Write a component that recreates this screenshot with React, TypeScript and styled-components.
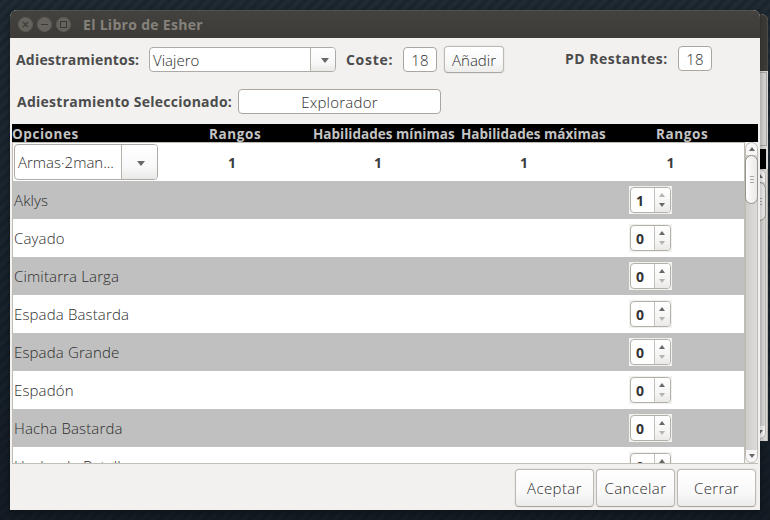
import React from "react";
import styled, { createGlobalStyle } from "styled-components";

const Global = createGlobalStyle`
  *{box-sizing:border-box}
  html,body{margin:0;padding:0;overflow:hidden}
  body{font-family:"Open Sans","Noto Sans",sans-serif;color:#2c2c2c}
`;

const Desktop = styled.div`
  position:relative;width:770px;height:520px;overflow:hidden;
  background:
    linear-gradient(180deg,rgba(14,22,30,0) 0%,rgba(10,17,24,.55) 100%),
    repeating-linear-gradient(135deg,#19232b 0,#212c34 4px,#19232b 8px);
`;

const BackWindow = styled.div`
  position:absolute;left:600px;top:14px;width:168px;height:427px;
  display:flex;flex-direction:column;background:#d9d8d6;
  border-radius:0 7px 0 0;overflow:hidden;
`;
const BackTitle = styled.div`height:57px;flex:none;background:#3c3b37;border-right:1px solid #4b4a45;`;
const BackPanel = styled.div`
  height:74px;flex:none;margin:1px 1px 3px 0;
  border:1px solid #aaa7a3;border-left:0;background:#d5d4d3;
`;
const BackHeader = styled.div`height:20px;flex:none;margin-right:2px;background:#000;`;
const BackScroll = styled.div`
  flex:1;display:flex;justify-content:flex-end;padding:0 1px 2px 0;
  border-right:1px solid #b8b5b1;
`;

const Window = styled.div`
  position:absolute;left:10px;top:10px;width:750px;height:500px;
  display:flex;flex-direction:column;background:#f2f1f0;
  border-radius:7px 7px 0 0;overflow:hidden;box-shadow:0 2px 6px rgba(0,0,0,.35);
`;
const TitleBar = styled.div`
  height:28px;flex:none;display:flex;align-items:center;gap:4px;padding-left:8px;
  background:linear-gradient(#43423e,#3c3b37);border-top:1px solid #53524d;
`;
const Caption = styled.div`
  margin-left:8px;font-size:14px;font-weight:700;color:#85827b;white-space:nowrap;
  letter-spacing:.3px;line-height:27px;
`;
const Toolbar = styled.div`
  display:flex;flex:none;height:42px;padding:8px 0 0 6px;align-items:flex-start;
`;
const SelectedRow = styled.div`
  display:flex;flex:none;height:44px;padding:9px 0 0 7px;align-items:flex-start;
`;
const Label = styled.div<{ $w: number; $ls?: number; $gap?: number; $top?: number }>`
  width:${p => p.$w}px;flex:none;font-size:14px;font-weight:700;line-height:26px;
  margin-left:${p => p.$gap ?? 0}px;margin-top:${p => p.$top ?? 0}px;
  letter-spacing:${p => p.$ls ?? 0}px;white-space:nowrap;color:#4c4c4c;
`;
const Field = styled.div<{ $w: number; $top?: number }>`
  width:${p => p.$w}px;height:25px;flex:none;margin-top:${p => p.$top ?? 0}px;
  border:1px solid #aaa69f;border-radius:4px;background:#fff;
  font-size:15px;font-weight:300;line-height:24px;text-align:center;letter-spacing:.25px;
`;
const Combo = styled.div<{ $w: number; $h: number; $arrow: number; $top?: number }>`
  width:${p => p.$w}px;height:${p => p.$h}px;flex:none;margin-top:${p => p.$top ?? 0}px;
  display:grid;grid-template-columns:1fr ${p => p.$arrow}px;
  border:1px solid #aeaba6;border-radius:4px;background:#fff;overflow:hidden;
`;
const ComboText = styled.div`
  display:flex;align-items:center;padding-left:3px;font-size:15px;font-weight:300;
  white-space:nowrap;
`;
const ComboArrow = styled.div`
  display:flex;align-items:center;justify-content:center;padding-top:2px;padding-left:3px;
  border-left:1px solid #b5b1ab;background:linear-gradient(#fff,#f8f8f8 65%,#eae9e8);
`;
const Button = styled.div<{ $w: number; $h: number; $gap?: number; $ls?: number }>`
  width:${p => p.$w}px;height:${p => p.$h}px;flex:none;margin-left:${p => p.$gap ?? 0}px;
  display:flex;align-items:center;justify-content:center;
  border:1px solid #bcb8b2;border-bottom-color:#a9a59f;border-radius:4px;
  background:linear-gradient(#fff,#f8f8f8 65%,#ecebea);box-shadow:0 0 0 1px #ebe9e7;
  font-size:15px;font-weight:300;letter-spacing:${p => p.$ls ?? 0}px;
`;

const TableHead = styled.div`
  display:grid;grid-template-columns:197px 104px 148px 195px 1fr;flex:none;height:18px;
  margin:0 2px;background:#000;color:#c4c4c4;font-size:13.5px;font-weight:700;line-height:20px;
`;
const HeadCell = styled.div<{ $ls: number }>`
  white-space:nowrap;letter-spacing:${p => p.$ls}px;
`;
const TableArea = styled.div`display:flex;flex:none;height:322px;margin:0 2px;border-bottom:1px solid #c0bcb6;`;
const Viewport = styled.div`
  width:733px;flex:none;overflow:hidden;background:#fff;
  border:1px solid #c0bcb6;border-bottom:0;
`;
const Row = styled.div<{ $alt?: boolean }>`
  height:38px;display:grid;grid-template-columns:146px 146px 146px 146px 1fr;align-items:center;
  background:${p => (p.$alt ? "#c0c0c0" : "#fff")};
`;
const ComboCell = styled.div`padding-left:1px;`;
const NameCell = styled.div`
  grid-column:1 / 5;padding-left:1px;font-size:15px;font-weight:300;white-space:nowrap;
  letter-spacing:.14px;
`;
const Count = styled.div`
  text-align:center;font-size:14px;font-weight:700;color:#3c3c3c;padding-top:1px;
`;
const Spin = styled.div`
  width:43px;height:28px;margin-left:32px;padding:1px;background:#f2f1f0;
`;
const SpinBody = styled.div`
  height:26px;display:grid;grid-template-columns:23px 1fr;
  border:1px solid #b3afa9;border-radius:4px;background:#fff;overflow:hidden;
`;
const SpinValue = styled.div`padding-left:5px;font-size:14px;font-weight:700;line-height:25px;color:#333;`;
const SpinArrows = styled.div`
  display:flex;flex-direction:column;align-items:center;justify-content:center;gap:6px;
  padding:0 2px 1px 0;
  border-left:1px solid #c4c0bb;background:linear-gradient(#fff,#f5f5f4 60%,#e9e8e6);
`;
const Track = styled.div`
  width:13px;height:100%;display:flex;flex-direction:column;align-items:center;
  border:1px solid #bdb9b3;border-radius:7px;background:linear-gradient(90deg,#cfcdcb,#dddcda);
`;
const Spacer = styled.div`flex:1;`;
const Cap = styled.div<{ $end?: boolean }>`
  width:11px;height:12px;flex:none;display:flex;align-items:center;justify-content:center;
  background:#f7f6f6;border-radius:${p => (p.$end ? "0 0 6px 6px" : "6px 6px 0 0")};
`;
const Thumb = styled.div<{ $h: number }>`
  width:13px;height:${p => p.$h}px;flex:none;margin:0 -1px;
  display:flex;flex-direction:column;align-items:center;justify-content:center;gap:2px;
  border:1px solid #96928c;border-radius:7px;background:linear-gradient(90deg,#fff,#e9e8e6);
`;
const Grip = styled.div`width:4px;height:1px;background:#a9a6a2;`;
const Footer = styled.div`
  flex:1;display:flex;justify-content:flex-end;gap:2px;padding:5px 4px 0 0;
`;

const Arrow = ({ up, dim, w = 6 }: { up?: boolean; dim?: boolean; w?: number }) => (
  <svg width={w} height={w / 2 + 1} viewBox="0 0 8 5" preserveAspectRatio="none">
    <path d={up ? "M0 5 4 0 8 5Z" : "M0 0H8L4 5Z"} fill={dim ? "#b5b3b0" : "#686868"} />
  </svg>
);

const WindowButton = ({ kind }: { kind: "close" | "min" | "max" }) => (
  <svg width="15" height="15" viewBox="0 0 15 15" fill="none" stroke="#3b3a36">
    <circle cx="7.5" cy="7.5" r="7" fill="#66635d" stroke="#5f5d57" />
    {kind === "close" && <path d="M5 5l5 5M10 5l-5 5" strokeWidth="1.1" />}
    {kind === "min" && <path d="M4 7.5h7" />}
    {kind === "max" && <rect x="4.5" y="4.5" width="6" height="6" />}
  </svg>
);

const ScrollBar = ({ thumb }: { thumb: number }) => (
  <Track>
    <Cap><Arrow up /></Cap>
    <Thumb $h={thumb}><Grip /><Grip /><Grip /></Thumb>
    <Spacer />
    <Cap $end><Arrow /></Cap>
  </Track>
);

const weapons: [string, number][] = [
  ["Aklys", 1], ["Cayado", 0], ["Cimitarra Larga", 0], ["Espada Bastarda", 0],
  ["Espada Grande", 0], ["Espadón", 0], ["Hacha Bastarda", 0], ["Hacha de Batalla", 0],
];

export default function App() {
  return (
    <Desktop>
      <Global />
      <BackWindow>
        <BackTitle />
        <BackPanel />
        <BackHeader />
        <BackScroll><ScrollBar thumb={39} /></BackScroll>
      </BackWindow>
      <Window>
        <TitleBar>
          <WindowButton kind="close" />
          <WindowButton kind="min" />
          <WindowButton kind="max" />
          <Caption>El Libro de Esher</Caption>
        </TitleBar>
        <Toolbar>
          <Label $w={133} $ls={0.2} $top={1}>Adiestramientos:</Label>
          <Combo $w={187} $h={25} $arrow={25} $top={1}>
            <ComboText>Viajero</ComboText>
            <ComboArrow><Arrow w={8} /></ComboArrow>
          </Combo>
          <Label $w={57} $ls={0.7} $gap={10} $top={1}>Coste:</Label>
          <Field $w={34} $top={1}>18</Field>
          <Button $w={60} $h={27} $gap={7}>Añadir</Button>
          <Label $w={113} $ls={0.5} $gap={61}>PD Restantes:</Label>
          <Field $w={34}>18</Field>
        </Toolbar>
        <SelectedRow>
          <Label $w={221} $ls={0.26}>Adiestramiento Seleccionado:</Label>
          <Field $w={203}>Explorador</Field>
        </SelectedRow>
        <TableHead>
          <HeadCell $ls={0.55}>Opciones</HeadCell>
          <HeadCell $ls={0.6}>Rangos</HeadCell>
          <HeadCell $ls={0.02}>Habilidades mínimas</HeadCell>
          <HeadCell $ls={0.02}>Habilidades máximas</HeadCell>
          <HeadCell $ls={0.6}>Rangos</HeadCell>
        </TableHead>
        <TableArea>
          <Viewport>
            <Row>
              <ComboCell>
                <Combo $w={144} $h={36} $arrow={36}>
                  <ComboText>Armas·2man...</ComboText>
                  <ComboArrow><Arrow w={8} /></ComboArrow>
                </Combo>
              </ComboCell>
              <Count>1</Count><Count>1</Count><Count>1</Count><Count>1</Count>
            </Row>
            {weapons.map(([name, n], i) => (
              <Row key={name} $alt={i % 2 === 0}>
                <NameCell>{name}</NameCell>
                <Spin><SpinBody>
                  <SpinValue>{n}</SpinValue>
                  <SpinArrows><Arrow up dim={n === 1} /><Arrow dim={n === 0} /></SpinArrows>
                </SpinBody></Spin>
              </Row>
            ))}
          </Viewport>
          <ScrollBar thumb={49} />
        </TableArea>
        <Footer>
          <Button $w={79} $h={38} $ls={0.4}>Aceptar</Button>
          <Button $w={79} $h={38} $ls={0.4}>Cancelar</Button>
          <Button $w={79} $h={38} $ls={0.3}>Cerrar</Button>
        </Footer>
      </Window>
    </Desktop>
  );
}
